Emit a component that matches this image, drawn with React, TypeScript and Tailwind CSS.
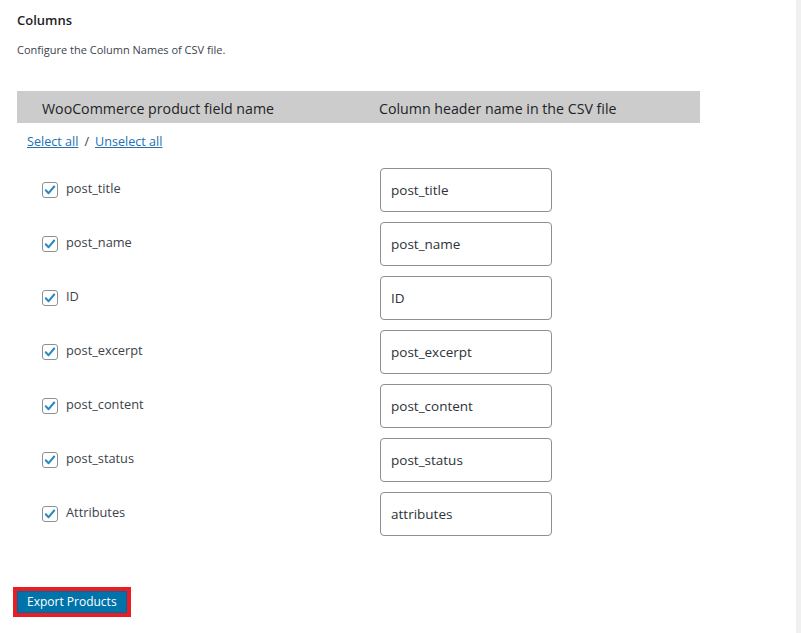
import React from "react";

const rows = [
  ["post_title", "post_title"],
  ["post_name", "post_name"],
  ["ID", "ID"],
  ["post_excerpt", "post_excerpt"],
  ["post_content", "post_content"],
  ["post_status", "post_status"],
  ["Attributes", "attributes"],
];

function Check() {
  return (
    <span className="w-[16px] h-[16px] rounded-[3px] border border-[#8c8f94] bg-white flex items-center justify-center shrink-0">
      <svg width="14" height="14" viewBox="0 0 20 20">
        <path d="M4 10.5 L8 14.5 L16 5" fill="none" stroke="#2a8bc4" strokeWidth="3" strokeLinecap="round" strokeLinejoin="round" />
      </svg>
    </span>
  );
}

export default function App() {
  return (
    <div className="w-[801px] h-[633px] flex overflow-hidden" style={{ fontFamily: '"Open Sans", "Noto Sans", sans-serif' }}>
      <div className="flex-1 bg-white pl-[17px]">
        <div className="mt-[10px] h-[20px] leading-[20px] text-[13px] font-semibold text-[#1d2327]">Columns</div>
        <div className="mt-[12px] h-[16px] leading-[16px] text-[11px] text-[#3c434a]">Configure the Column Names of CSV file.</div>
        <div className="mt-[33px] w-[683px] h-[32px] bg-[#cccccc] flex items-center pt-[3px] text-[14.2px] text-[#1d2327]">
          <div className="w-[362px] pl-[25px]">WooCommerce product field name</div>
          <div>Column header name in the CSV file</div>
        </div>
        <div className="mt-[10px] h-[18px] leading-[18px] pl-[10px] text-[12.6px] text-[#3c434a] flex gap-[6px]">
          <a className="underline text-[#2271b1]">Select all</a>
          <span>/</span>
          <a className="underline text-[#2271b1]">Unselect all</a>
        </div>
        <div className="mt-[17px] flex flex-col gap-[10px]">
          {rows.map(([label, value]) => (
            <div key={label} className="flex items-center h-[44px]">
              <div className="w-[363px] pl-[25px] flex items-center gap-[8px] text-[12.8px] text-[#3c434a]">
                <Check />
                <span className="-mt-[3px]">{label}</span>
              </div>
              <div className="w-[172px] h-[44px] rounded-[4px] border border-[#8c8f94] bg-white flex items-center px-[10px] text-[13.5px] text-[#2c3338]">
                {value}
              </div>
            </div>
          ))}
        </div>
        <div className="mt-[51px] -ml-[4px] inline-flex border-[4px] border-[#ec1c24]">
          <button className="bg-[#0073aa] text-white text-[12px] leading-[20px] px-[9px] h-[22px] border border-[#006799]">
            Export Products
          </button>
        </div>
      </div>
      <div className="w-[5px] bg-[#f0f0f0]" />
    </div>
  );
}
